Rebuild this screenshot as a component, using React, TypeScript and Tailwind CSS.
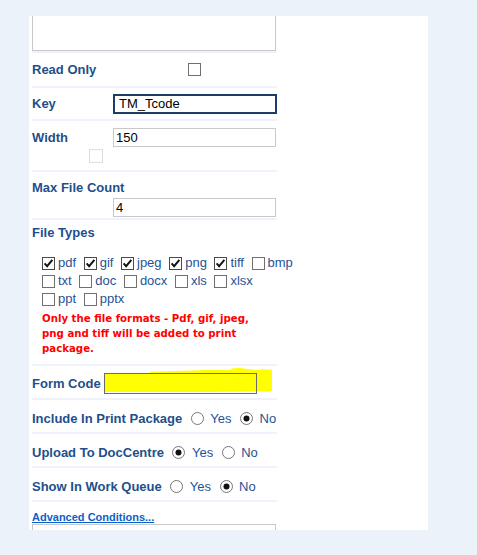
import React from 'react';

function Box({ checked = false }: { checked?: boolean }) {
  return (
    <svg width="13" height="13" viewBox="0 0 13 13" className="shrink-0">
      <rect x="0.5" y="0.5" width="12" height="12" fill="#fff" stroke={checked ? '#4a4a4a' : '#707070'} />
      {checked && <path d="M2.6 6.4 L5.1 9.2 L10.4 2.8" fill="none" stroke="#111" strokeWidth="1.9" />}
    </svg>
  );
}

function Radio({ on = false }: { on?: boolean }) {
  return (
    <svg width="13" height="13" viewBox="0 0 13 13" className="shrink-0 ml-[8.5px] mr-[6.5px]">
      <circle cx="6.5" cy="6.5" r="6" fill="#fff" stroke="#777" />
      {on && <circle cx="6.5" cy="6.5" r="3" fill="#111" />}
    </svg>
  );
}

function Sep() {
  return <div className="h-[2px] bg-[#edf2fc]" />;
}

function Opt({ name, checked = false }: { name: string; checked?: boolean }) {
  return (
    <span className="flex items-center mr-[3.6px]">
      <span className="ml-[4px] mr-[3px] flex">
        <Box checked={checked} />
      </span>
      {name}
    </span>
  );
}

function YesNo({ label, yes }: { label: string; yes: boolean }) {
  return (
    <div className="h-[32px] pt-[5px] flex items-center">
      <span className="font-bold text-[13px] text-[#1e4f8c]">{label}</span>
      <Radio on={yes} />
      <span className="text-[13px] text-[#1f5395]">Yes</span>
      <Radio on={!yes} />
      <span className="text-[13px] text-[#1f5395]">No</span>
    </div>
  );
}

export default function App() {
  return (
    <div className="w-[477px] h-[555px] bg-[#ebf2fa] pt-[16px] pl-[29px] overflow-hidden font-['Liberation_Sans',Arial,sans-serif]">
      <div className="w-[399px] h-[514px] bg-white pl-[3px] overflow-hidden">
        <div className="w-[245px]">
          <div className="h-[35px] w-[244px] border-x border-b border-[#c8c8c8]" />
          <Sep />

          <div className="h-[33px] flex items-center">
            <span className="w-[156px] font-bold text-[13px] text-[#1e4f8c]">Read Only</span>
            <Box />
          </div>
          <Sep />

          <div className="h-[31px] flex items-center">
            <span className="w-[81px] font-bold text-[13px] text-[#1e4f8c]">Key</span>
            <div className="w-[164px] h-[20px] border-2 border-[#1b3d66] text-[13px] leading-[16px] pl-[4px] text-black">
              TM_Tcode
            </div>
          </div>
          <Sep />

          <div className="h-[49px] pt-[7px]">
            <div className="h-[19px] flex items-center">
              <span className="w-[81px] font-bold text-[13px] text-[#1e4f8c]">Width</span>
              <div className="w-[163px] h-[19px] border border-[#c9c9c9] text-[13px] leading-[17px] pl-[2px] text-black">
                150
              </div>
            </div>
            <div className="ml-[57px] mt-[2px] w-[14px] h-[14px] border border-[#dedede]" />
          </div>
          <Sep />

          <div className="h-[46px] pt-[8px]">
            <div className="font-bold text-[13px] leading-[16px] text-[#1e4f8c]">Max File Count</div>
            <div className="ml-[81px] mt-[2px] w-[163px] h-[19px] border border-[#c9c9c9] text-[13px] leading-[17px] pl-[2px] text-black">
              4
            </div>
          </div>
          <Sep />

          <div className="h-[144px] pt-[5px]">
            <div className="font-bold text-[13px] leading-[16px] text-[#1e4f8c]">File Types</div>
            <div className="mt-[13px] pl-[6px] text-[13px] text-[#1f5395] whitespace-nowrap">
              <div className="h-[18px] flex items-center">
                <Opt name="pdf" checked />
                <Opt name="gif" checked />
                <Opt name="jpeg" checked />
                <Opt name="png" checked />
                <Opt name="tiff" checked />
                <Opt name="bmp" />
              </div>
              <div className="h-[18px] flex items-center">
                <Opt name="txt" />
                <Opt name="doc" />
                <Opt name="docx" />
                <Opt name="xls" />
                <Opt name="xlsx" />
              </div>
              <div className="h-[18px] flex items-center">
                <Opt name="ppt" />
                <Opt name="pptx" />
              </div>
            </div>
            <p className="mt-[3px] pl-[10px] font-['DejaVu_Sans',Verdana,sans-serif] font-bold text-[10.2px] leading-[15px] text-[#ff0000] whitespace-nowrap">
              Only the file formats - Pdf, gif, jpeg,
              <br />
              png and tiff will be added to print
              <br />
              package.
            </p>
          </div>
          <Sep />

          <div className="relative h-[32px] pt-[3px] flex items-center">
            <svg className="absolute left-[68px] top-[-1px]" width="180" height="35" viewBox="0 0 180 35">
              <path
                d="M5 9 L50 9 L50 6.7 L85 5.7 L107 5 L130 4.7 L133 3.3 L140 3 L147 4 L157 5 L163 4.3 L172 4.7 L172 26 L167 26.7 L160 26.3 L140 26.7 L100 27 L60 27 L5 27 Z"
                fill="#ffff00"
              />
            </svg>
            <span className="relative font-bold text-[13px] text-[#1e4f8c]">Form Code</span>
            <div className="relative ml-[3.5px] w-[153px] h-[21px] border border-[#6b6b6b]" />
          </div>
          <Sep />

          <YesNo label="Include In Print Package" yes={false} />
          <Sep />
          <YesNo label="Upload To DocCentre" yes={true} />
          <Sep />
          <YesNo label="Show In Work Queue" yes={false} />
          <Sep />

          <a href="#" className="block mt-[8px] font-bold text-[11px] leading-[14px] text-[#0b5fc6] underline">
            Advanced Conditions...
          </a>
          <div className="w-[244px] h-[20px] border border-[#c8c8c8]" />
        </div>
      </div>
    </div>
  );
}
